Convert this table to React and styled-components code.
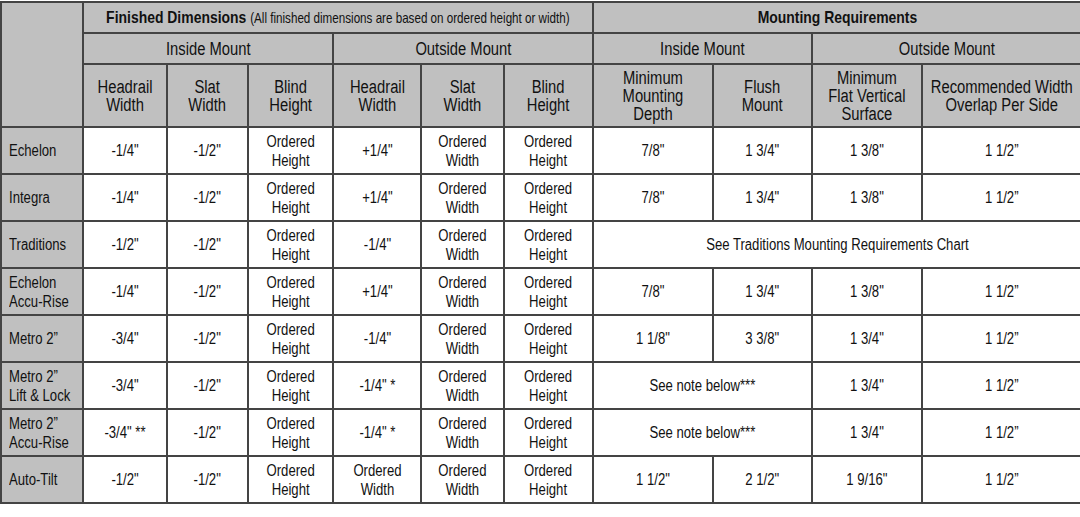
import * as React from 'react';
import styled, { createGlobalStyle } from 'styled-components';

// No narrow face is installed, so Liberation Sans is squeezed to Arial Narrow's width.
const GlobalStyle = createGlobalStyle`
  html, body {
    margin: 0;
    padding: 0;
    background: #ffffff;
  }
  body {
    font-family: "Liberation Sans", Arial, sans-serif;
    color: #111111;
  }
`;

const colWidths = [82, 84, 81, 85, 88, 83, 89, 120, 99, 110, 159];

const rows = [
  { name: ['Echelon'], cells: ['-1/4"', '-1/2"', 'Ordered Height', '+1/4"', 'Ordered Width', 'Ordered Height'], mount: ['7/8"', '1 3/4"', '1 3/8"', '1 1/2”'] },
  { name: ['Integra'], cells: ['-1/4"', '-1/2"', 'Ordered Height', '+1/4"', 'Ordered Width', 'Ordered Height'], mount: ['7/8"', '1 3/4"', '1 3/8"', '1 1/2”'] },
  { name: ['Traditions'], cells: ['-1/2"', '-1/2"', 'Ordered Height', '-1/4"', 'Ordered Width', 'Ordered Height'], note: 'See Traditions Mounting Requirements Chart' },
  { name: ['Echelon', 'Accu-Rise'], cells: ['-1/4"', '-1/2"', 'Ordered Height', '+1/4"', 'Ordered Width', 'Ordered Height'], mount: ['7/8"', '1 3/4"', '1 3/8"', '1 1/2”'] },
  { name: ['Metro 2”'], cells: ['-3/4"', '-1/2"', 'Ordered Height', '-1/4"', 'Ordered Width', 'Ordered Height'], mount: ['1 1/8"', '3 3/8"', '1 3/4"', '1 1/2”'] },
  { name: ['Metro 2”', 'Lift & Lock'], cells: ['-3/4"', '-1/2"', 'Ordered Height', '-1/4" *', 'Ordered Width', 'Ordered Height'], partial: 'See note below***', mount: ['1 3/4"', '1 1/2”'] },
  { name: ['Metro 2”', 'Accu-Rise'], cells: ['-3/4" **', '-1/2"', 'Ordered Height', '-1/4" *', 'Ordered Width', 'Ordered Height'], partial: 'See note below***', mount: ['1 3/4"', '1 1/2”'] },
  { name: ['Auto-Tilt'], cells: ['-1/2"', '-1/2"', 'Ordered Height', 'Ordered Width', 'Ordered Width', 'Ordered Height'], mount: ['1 1/2"', '2 1/2"', '1 9/16"', '1 1/2”'] },
];

const Wrap = styled.div`
  padding-top: 1px;
  width: 1080px;
`;

const Table = styled.table`
  width: 1080px;
  table-layout: fixed;
  border-collapse: collapse;
  border: 2px solid #444444;
`;

const HeadCell = styled.th`
  background: #c0c0c0;
  border: 2px solid #444444;
  font-weight: ${(p) => (p.$strong ? 700 : 400)};
  font-size: ${(p) => (p.$strong ? 17 : 18)}px;
  line-height: 18px;
  height: ${(p) => p.$h}px;
  padding: 0;
  text-align: center;
  vertical-align: middle;
  color: #111111;
`;

const Sub = styled.span`
  font-weight: 400;
  font-size: 14.2px;
`;

const Label = styled.td`
  background: #c0c0c0;
  border: 2px solid #444444;
  font-size: 16px;
  line-height: 19px;
  padding: 0 0 0 7px;
  height: 45px;
  vertical-align: middle;
`;

const Cell = styled.td`
  background: #ffffff;
  border: 2px solid #444444;
  border-left-color: ${(p) => (p.$dark ? '#111111' : '#444444')};
  border-top-color: #222222;
  font-size: 16px;
  line-height: 19px;
  padding: 0;
  height: 45px;
  text-align: center;
  vertical-align: middle;
`;

const Fit = styled.span`
  display: block;
  white-space: nowrap;
  width: 122%;
  margin-left: ${(p) => (p.$left ? '0' : '-11%')};
  text-align: ${(p) => (p.$left ? 'left' : 'center')};
  transform: scaleX(0.82);
  transform-origin: ${(p) => (p.$left ? 'left center' : 'center')};
`;

const Line = styled.span`
  display: block;
`;

const Lines = ({ items }) => items.map((t, i) => <Line key={i}>{t}</Line>);

const split = (text) => (text.startsWith('Ordered') ? text.split(' ') : [text]);

const App = () => (
  <Wrap>
    <GlobalStyle />
    <Table>
      <colgroup>
        {colWidths.map((w, i) => (
          <col key={i} style={{ width: w }} />
        ))}
      </colgroup>
      <thead>
        <tr>
          <HeadCell rowSpan={3} />
          <HeadCell colSpan={6} $strong $h={29}>
            <Fit>
              Finished Dimensions <Sub>(All finished dimensions are based on ordered height or width)</Sub>
            </Fit>
          </HeadCell>
          <HeadCell colSpan={4} $strong $h={29}>
            <Fit>Mounting Requirements</Fit>
          </HeadCell>
        </tr>
        <tr>
          <HeadCell colSpan={3} $h={29}><Fit>Inside Mount</Fit></HeadCell>
          <HeadCell colSpan={3} $h={29}><Fit>Outside Mount</Fit></HeadCell>
          <HeadCell colSpan={2} $h={29}><Fit>Inside Mount</Fit></HeadCell>
          <HeadCell colSpan={2} $h={29}><Fit>Outside Mount</Fit></HeadCell>
        </tr>
        <tr>
          {[
            ['Headrail', 'Width'],
            ['Slat', 'Width'],
            ['Blind', 'Height'],
            ['Headrail', 'Width'],
            ['Slat', 'Width'],
            ['Blind', 'Height'],
            ['Minimum', 'Mounting', 'Depth'],
            ['Flush', 'Mount'],
            ['Minimum', 'Flat Vertical', 'Surface'],
            ['Recommended Width', 'Overlap Per Side'],
          ].map((h, i) => (
            <HeadCell key={i} $h={61}>
              <Fit><Lines items={h} /></Fit>
            </HeadCell>
          ))}
        </tr>
      </thead>
      <tbody>
        {rows.map((r) => (
          <tr key={r.name.join(' ')}>
            <Label>
              <Fit $left><Lines items={r.name} /></Fit>
            </Label>
            {r.cells.map((c, i) => (
              <Cell key={i} $dark={i === 3}>
                <Fit><Lines items={split(c)} /></Fit>
              </Cell>
            ))}
            {r.note && (
              <Cell colSpan={4}><Fit>{r.note}</Fit></Cell>
            )}
            {r.partial && (
              <Cell colSpan={2}><Fit>{r.partial}</Fit></Cell>
            )}
            {r.mount &&
              r.mount.map((m, i) => (
                <Cell key={`m${i}`} $dark={r.partial ? i === 0 : i === 2}>
                  <Fit>{m}</Fit>
                </Cell>
              ))}
          </tr>
        ))}
      </tbody>
    </Table>
  </Wrap>
);

export default App;
